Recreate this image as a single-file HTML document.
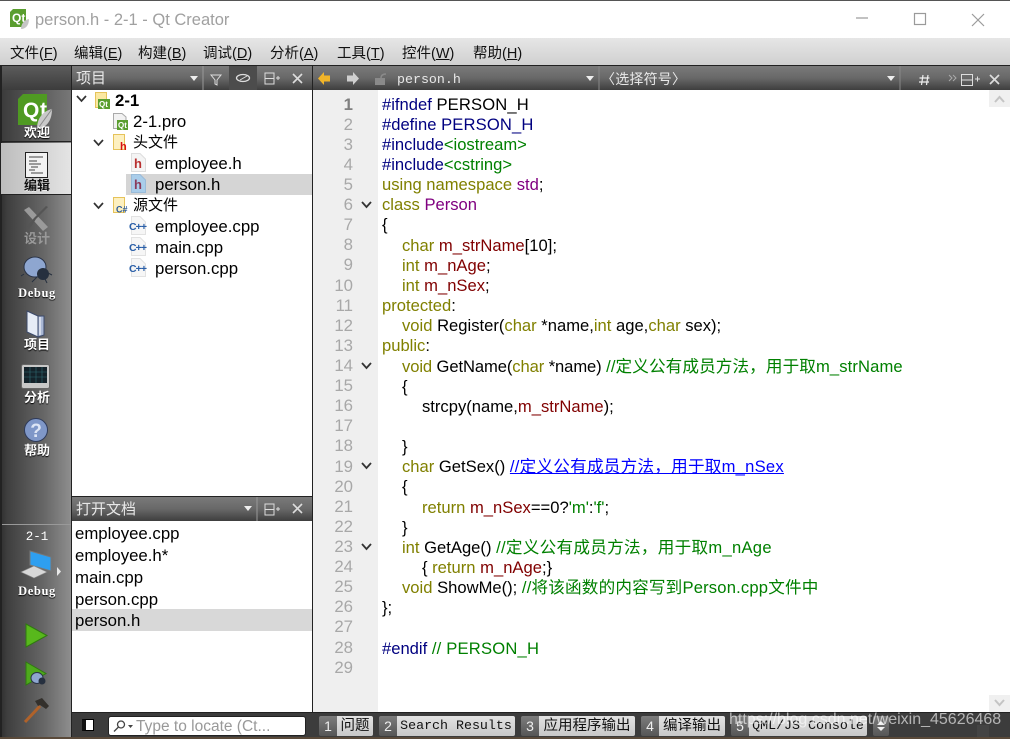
<!DOCTYPE html>
<html><head><meta charset="utf-8"><style>
*{margin:0;padding:0;box-sizing:border-box}
html,body{width:1010px;height:739px;overflow:hidden;background:#2a2a2a}
body{position:relative;font-family:"Liberation Sans","Noto Sans CJK SC",sans-serif;color:#000}
.a{position:absolute;white-space:pre}
.hdr{background:linear-gradient(#7a7a7a,#686868 50%,#3e3e3e);position:absolute}
.w{color:#e8e8e8}
.sb{position:absolute;left:3px;width:68px;text-align:center;color:#fff;font-weight:bold;font-size:13px;line-height:14px;text-shadow:0 1px 1px #000}
.m{font-family:"Liberation Mono","Noto Sans CJK SC",monospace}
.t{position:absolute;font-size:16.8px;line-height:21px;height:21px;white-space:pre}
.code{position:absolute;left:382px;top:94.5px;font-size:16.6px;line-height:20.16px;color:#000}
.code div{height:20.16px;white-space:pre}
.code .i1{padding-left:20px}.code .i2{padding-left:40px}
.nums{position:absolute;left:313px;top:94.6px;width:40px;text-align:right;font-size:16.8px;line-height:20.12px;color:#a8a8a8}
.nums div{height:20.12px}
.p{color:#000080}.k{color:#808000}.c{color:#800080}.g{color:#008000}.r{color:#800000}
.n{position:absolute;top:716px;height:20px;width:18px;background:linear-gradient(#7c7c7c,#565656);color:#eee;font-size:14px;line-height:20px;text-align:center;border-radius:2px 0 0 2px}
.b{position:absolute;top:716px;height:20px;background:linear-gradient(#e2e2e2,#c8c8c8);font-size:13.3px;line-height:20px;color:#111;text-align:center;border-radius:0 2px 2px 0;white-space:pre}
svg{position:absolute;overflow:visible}
</style></head><body>
<div class="a" style="left:0;top:0;width:1010px;height:38px;background:#fff;border-top:1px solid #555"></div>
<svg style="left:10px;top:9px" width="20" height="20"><path d="M3 0H16V15L13 18H0V3Z" fill="#5a9e2f"/><text x="2" y="13" font-size="12" font-weight="bold" fill="#fff" font-family="Liberation Sans">Qt</text><path d="M19 10C14 11 11 15 11 20C16 20 19 16 19 10Z" fill="#c6c6c6"/></svg>
<div class="a" style="left:35px;top:10px;font-size:16.5px;line-height:20px;color:#a0a0a0">person.h - 2-1 - Qt Creator</div>
<svg style="left:856px;top:13px" width="130" height="14" fill="none" stroke="#9a9a9a" stroke-width="1.2"><path d="M0 5H12"/><rect x="58.5" y="0.5" width="11" height="11"/><path d="M116 1L128 13M128 1L116 13"/></svg>

<div class="a" style="left:0;top:38px;width:1010px;height:28px;background:linear-gradient(#e6e6e6,#d0d0d0);border-bottom:1px solid #222"></div>
<div class="a" style="left:10px;top:45px;font-size:14.5px;line-height:18px;color:#111">文件(<u>F</u>)</div>
<div class="a" style="left:74px;top:45px;font-size:14.5px;line-height:18px;color:#111">编辑(<u>E</u>)</div>
<div class="a" style="left:138px;top:45px;font-size:14.5px;line-height:18px;color:#111">构建(<u>B</u>)</div>
<div class="a" style="left:203px;top:45px;font-size:14.5px;line-height:18px;color:#111">调试(<u>D</u>)</div>
<div class="a" style="left:270px;top:45px;font-size:14.5px;line-height:18px;color:#111">分析(<u>A</u>)</div>
<div class="a" style="left:337px;top:45px;font-size:14.5px;line-height:18px;color:#111">工具(<u>T</u>)</div>
<div class="a" style="left:402px;top:45px;font-size:14.5px;line-height:18px;color:#111">控件(<u>W</u>)</div>
<div class="a" style="left:473px;top:45px;font-size:14.5px;line-height:18px;color:#111">帮助(<u>H</u>)</div>

<div class="a" style="left:0;top:66px;width:72px;height:671px;background:linear-gradient(90deg,#333 0,#3f3f3f 8%,#666 60%,#8e8e8e 100%);border-left:2px solid #222;border-right:1px solid #222"></div>
<div class="hdr" style="left:2px;top:66px;width:69px;height:24px;background:linear-gradient(#5c5c5c,#3c3c3c)"></div>
<div class="a" style="left:2px;top:90px;width:69px;height:52px;background:linear-gradient(90deg,#3c3c3c,#777);border-bottom:1px solid #222"></div>
<div class="a" style="left:1px;top:143px;width:70px;height:52px;background:linear-gradient(90deg,#bdbdbd,#e4e4e4);border-bottom:1px solid #222"></div>
<div class="a" style="left:2px;top:524px;width:69px;height:1px;background:#999"></div>

<svg style="left:18px;top:94px" width="36" height="36"><path d="M5 0H29V24L22 31H0V5Z" fill="#4f9a22"/><text x="5" y="23" font-size="21" font-weight="bold" fill="#fff" font-family="Liberation Sans" textLength="24">Qt</text><path d="M34 15C25 17 19 24 19 35C29 34 34 26 34 15Z" fill="#c9c9c9"/><path d="M34 15L21 33" stroke="#8a8a8a"/></svg>
<div class="sb" style="top:126px">欢迎</div>
<svg style="left:25px;top:152px" width="23" height="26"><rect x=".5" y=".5" width="22" height="25" fill="#f2f2f2" stroke="#222"/><path d="M4 5H18M4 9H12M4 12H16M6 15H13M4 18H10M6 21H18" stroke="#444"/></svg>
<div class="sb" style="top:179px;color:#111;text-shadow:0 1px 0 #eee">编辑</div>
<svg style="left:22px;top:206px" width="28" height="26"><path d="M2 4L7 1L26 21L21 25Z" fill="#9a9a9a"/><path d="M26 1L14 13L9 21L4 25L7 18L12 12L24 0Z" fill="#555"/></svg>
<div class="sb" style="top:232px;color:#999;text-shadow:none">设计</div>
<svg style="left:22px;top:256px" width="30" height="28"><ellipse cx="13" cy="11" rx="11" ry="10" fill="#8ea6d0" stroke="#2a3346"/><ellipse cx="21" cy="18" rx="6" ry="6" fill="#26303f"/><path d="M15 21L10 26M23 23L25 27M26 17L30 19M2 18L-1 20" stroke="#26303f"/></svg>
<div class="sb m" style="top:286px;font-family:'Liberation Serif',serif;font-size:12.5px;letter-spacing:.6px">Debug</div>
<svg style="left:26px;top:310px" width="20" height="28"><path d="M1 1L12 6V27L1 22Z" fill="#e6ecf6" stroke="#3c4a6a"/><path d="M12 6H18V25L12 27Z" fill="#a9b7d4" stroke="#3c4a6a"/><path d="M14 7V25" stroke="#fff"/></svg>
<div class="sb" style="top:338px">项目</div>
<svg style="left:21px;top:364px" width="30" height="26"><rect x=".5" y=".5" width="28" height="24" rx="2" fill="#c8c8c8" stroke="#666"/><rect x="3" y="3" width="23" height="16" fill="#14222a"/><path d="M3 8H26M3 13H26M9 3V19M15 3V19M21 3V19" stroke="#2f6a72" stroke-width=".6"/></svg>
<div class="sb" style="top:391px">分析</div>
<svg style="left:24px;top:418px" width="24" height="24"><circle cx="12" cy="12" r="11.5" fill="#7f97c8" stroke="#2f3b5a"/><text x="12" y="19" text-anchor="middle" font-size="19" font-weight="bold" fill="#dde5f5" font-family="Liberation Sans">?</text></svg>
<div class="sb" style="top:444px">帮助</div>
<div class="sb m" style="top:530px;font-weight:normal;font-size:12.5px;text-shadow:none">2-1</div>
<svg style="left:20px;top:550px" width="42" height="30"><path d="M10 1L31 7V21L10 15Z" fill="#2e9ff0" stroke="#777"/><path d="M1 22L14 16L27 22L14 28Z" fill="#d8d8d8" stroke="#888" stroke-width=".6"/><path d="M37 17V26L41 21.5Z" fill="#e8e8e8"/></svg>
<div class="sb m" style="top:584px;font-family:'Liberation Serif',serif;font-size:12.5px;letter-spacing:.6px">Debug</div>
<svg style="left:25px;top:624px" width="23" height="24"><path d="M1 0L22 11.5L1 23Z" fill="#58b81c" stroke="#2f7a10"/></svg>
<svg style="left:25px;top:662px" width="24" height="26"><path d="M1 0L21 11.5L1 23Z" fill="#4ea91c" stroke="#2f7a10"/><ellipse cx="12" cy="16" rx="6" ry="5.5" fill="#8ea6d0" stroke="#2a3346"/><ellipse cx="17" cy="19" rx="3.5" ry="3.5" fill="#26303f"/></svg>
<svg style="left:24px;top:698px" width="26" height="26"><path d="M1 24L16 8" stroke="#b0622a" stroke-width="3"/><path d="M11 3L18 0L25 8L22 11L16 7L14 8Z" fill="#33302c"/></svg>

<div class="a" style="left:72px;top:90px;width:240px;height:406px;background:#fff"></div>
<div class="hdr" style="left:72px;top:66px;width:240px;height:24px"></div>
<div class="a w" style="left:76px;top:69px;font-size:15px;line-height:19px">项目</div>
<svg style="left:190px;top:74px" width="122" height="14" fill="none"><path d="M0 2H8L4 7Z" fill="#eee"/><path d="M13 -8V16" stroke="#999"/><path d="M21 1H31L27 6V11L25 10V6Z" stroke="#ddd"/><path d="M39 -8H67V16H39Z" fill="#4c4c4c"/><ellipse cx="53" cy="4" rx="6.5" ry="3.5" stroke="#ddd" stroke-width="1.3"/><path d="M50 6L57 2" stroke="#ddd"/><path d="M75 -1H84V10H75ZM75 4.5H84M86 4H90M88 2V6" stroke="#ddd"/><path d="M103 0L112 9M112 0L103 9" stroke="#ddd" stroke-width="1.6"/></svg>

<svg style="left:76px;top:95px" width="12" height="8" fill="none" stroke="#333" stroke-width="1.7"><path d="M1 1L5.5 6L10 1"/></svg>
<svg style="left:95px;top:92px" width="16" height="17"><path d="M.5 .5H11.5V15.5H.5Z" fill="#fbe8a0" stroke="#e6c35a"/><rect x="3" y="7" width="12" height="10" fill="#5a9e2f"/><text x="4" y="15" font-size="8" font-weight="bold" fill="#fff" font-family="Liberation Sans">Qt</text></svg>
<div class="t" style="left:115px;top:90px;font-weight:bold">2-1</div>
<svg style="left:113px;top:113px" width="16" height="17"><path d="M.5 .5H9L13 4V15.5H.5Z" fill="#f2f2f2" stroke="#aaa"/><rect x="4" y="7" width="11" height="10" fill="#5a9e2f"/><text x="5" y="15" font-size="8" font-weight="bold" fill="#fff" font-family="Liberation Sans">Qt</text></svg>
<div class="t" style="left:133px;top:111px">2-1.pro</div>
<svg style="left:93px;top:139px" width="12" height="8" fill="none" stroke="#333" stroke-width="1.7"><path d="M1 1L5.5 6L10 1"/></svg>
<svg style="left:113px;top:134px" width="16" height="17"><path d="M.5 .5H11.5V15.5H.5Z" fill="#fdf0c0" stroke="#e6c35a"/><text x="7" y="16" font-size="11" font-weight="bold" fill="#d81010" font-family="Liberation Sans">h</text></svg>
<div class="t" style="left:133px;top:132px;font-size:15px">头文件</div>
<svg style="left:131px;top:153px" width="16" height="20"><path d="M.5 .5H9L14.5 6V18.5H.5Z" fill="#f4f4f4" stroke="#ddd"/><text x="3" y="15" font-size="13" font-weight="bold" fill="#b83030" font-family="Liberation Sans">h</text></svg>
<div class="t" style="left:155px;top:153px">employee.h</div>
<div class="a" style="left:126px;top:174px;width:186px;height:21px;background:#d5d5d5"></div>
<svg style="left:131px;top:174px" width="16" height="20"><path d="M.5 .5H9L14.5 6V18.5H.5Z" fill="#a9cdea" stroke="#9abbd8"/><text x="3" y="15" font-size="13" font-weight="bold" fill="#8a3a5a" font-family="Liberation Sans">h</text></svg>
<div class="t" style="left:155px;top:174px">person.h</div>
<svg style="left:93px;top:202px" width="12" height="8" fill="none" stroke="#333" stroke-width="1.7"><path d="M1 1L5.5 6L10 1"/></svg>
<svg style="left:113px;top:197px" width="17" height="17"><path d="M.5 .5H11.5V15.5H.5Z" fill="#fdf0c0" stroke="#e6c35a"/><text x="3" y="15.5" font-size="9" font-weight="bold" fill="#2a5a9a" font-family="Liberation Sans">C#</text></svg>
<div class="t" style="left:133px;top:195px;font-size:15px">源文件</div>
<svg style="left:129px;top:216px" width="20" height="20"><path d="M2.5 .5H11L16.5 6V18.5H2.5Z" fill="#f6f6f6" stroke="#e2e2e2"/><text x="0" y="14" font-size="10.5" font-weight="bold" fill="#2a5fa8" font-family="Liberation Sans" textLength="18">C++</text></svg>
<div class="t" style="left:155px;top:216px">employee.cpp</div>
<svg style="left:129px;top:237px" width="20" height="20"><path d="M2.5 .5H11L16.5 6V18.5H2.5Z" fill="#f6f6f6" stroke="#e2e2e2"/><text x="0" y="14" font-size="10.5" font-weight="bold" fill="#2a5fa8" font-family="Liberation Sans" textLength="18">C++</text></svg>
<div class="t" style="left:155px;top:237px">main.cpp</div>
<svg style="left:129px;top:258px" width="20" height="20"><path d="M2.5 .5H11L16.5 6V18.5H2.5Z" fill="#f6f6f6" stroke="#e2e2e2"/><text x="0" y="14" font-size="10.5" font-weight="bold" fill="#2a5fa8" font-family="Liberation Sans" textLength="18">C++</text></svg>
<div class="t" style="left:155px;top:258px">person.cpp</div>

<div class="a" style="left:72px;top:496px;width:240px;height:1px;background:#222"></div>
<div class="hdr" style="left:72px;top:497px;width:240px;height:24px"></div>
<div class="a w" style="left:76px;top:500px;font-size:15px;line-height:19px">打开文档</div>
<svg style="left:244px;top:505px" width="66" height="14" fill="none"><path d="M0 1H8L4 6Z" fill="#eee"/><path d="M13 -8V16" stroke="#999"/><path d="M21 -1H30V10H21ZM21 4.5H30M32 4H36M34 2V6" stroke="#ddd"/><path d="M49 -1L58 8M58 -1L49 8" stroke="#ddd" stroke-width="1.6"/></svg>
<div class="a" style="left:72px;top:521px;width:240px;height:191px;background:#fff"></div>
<div class="a" style="left:72px;top:609px;width:240px;height:22px;background:#d8d8d8"></div>
<div class="t" style="left:75px;top:523px">employee.cpp</div>
<div class="t" style="left:75px;top:545px">employee.h*</div>
<div class="t" style="left:75px;top:567px">main.cpp</div>
<div class="t" style="left:75px;top:589px">person.cpp</div>
<div class="t" style="left:75px;top:610px">person.h</div>

<div class="a" style="left:312px;top:66px;width:1px;height:646px;background:#222"></div>
<div class="hdr" style="left:313px;top:66px;width:697px;height:24px"></div>
<svg style="left:318px;top:72px" width="40" height="14"><path d="M0 6.5L6 0V3.5H12V9.5H6V13Z" fill="#f0b429"/><path d="M41 6.5L35 0V3.5H29V9.5H35V13Z" fill="#cfcfcf"/></svg>
<svg style="left:374px;top:73px" width="14" height="12"><rect x="1" y="5" width="10" height="7" fill="#8a8a8a"/><path d="M7 5C7 2 9 1 12 1" fill="none" stroke="#8a8a8a" stroke-width="1.5"/></svg>
<div class="a m w" style="left:397px;top:71px;font-size:13.3px;line-height:17px">person.h</div>
<svg style="left:586px;top:66px" width="424" height="24" fill="none"><path d="M0 10H8L4 15Z" fill="#eee"/><path d="M13 0V24" stroke="#888"/><path d="M301 10H309L305 15Z" fill="#eee"/><path d="M314 0V24" stroke="#888"/><path d="M337 9L335.5 19M342 9L340.5 19M333.5 12H343.500M333 16H343" stroke="#eee" stroke-width="1.2"/><path d="M363 9L366 12L363 15M367 9L370 12L367 15" stroke="#aaa"/><path d="M375.5 8.5H386.5V19.5H375.5ZM375.5 14H386.5M389 13H394M391.5 10.5V15.5" stroke="#ddd"/><path d="M404 9L413 18M413 9L404 18" stroke="#ddd" stroke-width="1.7"/></svg>
<div class="a w" style="left:601px;top:70px;font-size:14px;line-height:19px;letter-spacing:.2px">〈选择符号〉</div>

<div class="a" style="left:313px;top:90px;width:65px;height:622px;background:#efefef"></div>
<div class="a" style="left:378px;top:90px;width:632px;height:622px;background:#fff"></div>
<div class="a" style="left:989px;top:90px;width:21px;height:17px;background:#f0f0f0"></div>
<div class="a" style="left:989px;top:695px;width:21px;height:17px;background:#f0f0f0"></div>
<svg style="left:994px;top:96px" width="12" height="8" fill="none" stroke="#c4c4c4" stroke-width="2"><path d="M1 6L5.5 1L10 6"/></svg>
<svg style="left:994px;top:699px" width="12" height="8" fill="none" stroke="#c4c4c4" stroke-width="2"><path d="M1 1L5.5 6L10 1"/></svg>

<div class="nums"><div style="color:#808080;font-weight:bold">1</div><div>2</div><div>3</div><div>4</div><div>5</div><div>6</div><div>7</div><div>8</div><div>9</div><div>10</div><div>11</div><div>12</div><div>13</div><div>14</div><div>15</div><div>16</div><div>17</div><div>18</div><div>19</div><div>20</div><div>21</div><div>22</div><div>23</div><div>24</div><div>25</div><div>26</div><div>27</div><div>28</div><div>29</div></div>
<svg style="left:361px;top:201px" width="12" height="8" fill="none" stroke="#333" stroke-width="1.8"><path d="M1 1L5.5 6L10 1"/></svg>
<svg style="left:361px;top:362px" width="12" height="8" fill="none" stroke="#333" stroke-width="1.8"><path d="M1 1L5.5 6L10 1"/></svg>
<svg style="left:361px;top:462px" width="12" height="8" fill="none" stroke="#333" stroke-width="1.8"><path d="M1 1L5.5 6L10 1"/></svg>
<svg style="left:361px;top:543px" width="12" height="8" fill="none" stroke="#333" stroke-width="1.8"><path d="M1 1L5.5 6L10 1"/></svg>

<div class="code">
<div><span class="p">#ifndef</span> <span style="letter-spacing:.15px">PERSON_H</span></div>
<div><span class="p">#define <span style="letter-spacing:.15px">PERSON_H</span></span></div>
<div><span class="p">#include</span><span class="g">&lt;iostream&gt;</span></div>
<div><span class="p">#include</span><span class="g">&lt;cstring&gt;</span></div>
<div><span class="k">using namespace</span> <span class="c">std</span>;</div>
<div><span class="k">class</span> <span class="c">Person</span></div>
<div>{</div>
<div class="i1"><span class="k">char</span> <span class="r">m_strName</span>[10];</div>
<div class="i1"><span class="k">int</span> <span class="r">m_nAge</span>;</div>
<div class="i1"><span class="k">int</span> <span class="r">m_nSex</span>;</div>
<div><span class="k">protected</span>:</div>
<div class="i1"><span class="k">void</span> Register(<span class="k">char</span> *name,<span class="k">int</span> age,<span class="k">char</span> sex);</div>
<div><span class="k">public</span>:</div>
<div class="i1"><span style="letter-spacing:-.1px"><span class="k">void</span> GetName(<span class="k">char</span> *name) </span><span class="g" style="letter-spacing:.11px">//定义公有成员方法，用于取m_strName</span></div>
<div class="i1">{</div>
<div class="i2">strcpy(name,<span class="r">m_strName</span>);</div>
<div> </div>
<div class="i1">}</div>
<div class="i1"><span class="k">char</span> GetSex() <span style="color:#0000ff;text-decoration:underline;letter-spacing:.24px">//定义公有成员方法，用于取m_nSex</span></div>
<div class="i1">{</div>
<div class="i2"><span class="k">return</span> <span class="r">m_nSex</span>==0?<span class="g">'m'</span>:<span class="g">'f'</span>;</div>
<div class="i1">}</div>
<div class="i1"><span class="k">int</span> GetAge() <span class="g" style="letter-spacing:.28px">//定义公有成员方法，用于取m_nAge</span></div>
<div class="i2">{ <span class="k">return</span> <span class="r">m_nAge</span>;}</div>
<div class="i1"><span class="k">void</span> ShowMe(); <span class="g" style="letter-spacing:.18px">//将该函数的内容写到Person.cpp文件中</span></div>
<div>};</div>
<div> </div>
<div><span class="p">#endif</span> <span class="g" style="letter-spacing:.2px">// PERSON_H</span></div>
<div> </div>
</div>

<div class="a" style="left:72px;top:712px;width:938px;height:25px;background:#3c3c3c;border-top:1px solid #222"></div>
<div class="a" style="left:0;top:737px;width:1010px;height:2px;background:#5a4a3a"></div>
<div class="a" style="left:82px;top:719px;width:12px;height:12px;background:#fff;border:1px solid #000;border-left:4px solid #111"></div>
<div class="a" style="left:108px;top:716px;width:198px;height:20px;background:#fff;border:1px solid #222;border-radius:3px"></div>
<svg style="left:113px;top:720px" width="20" height="12" fill="none" stroke="#444" stroke-width="1.3"><circle cx="8" cy="4.5" r="3.5"/><path d="M5.5 7L1 11.5"/><path d="M15 5H20L17.5 8Z" fill="#444" stroke="none"/></svg>
<div class="a" style="left:136px;top:717px;font-size:15.5px;line-height:20px;color:#999">Type to locate (Ct...</div>
<div class="n" style="left:319px">1</div><div class="b" style="left:337px;width:36px;font-size:14.5px">问题</div>
<div class="n" style="left:379px">2</div><div class="b m" style="left:397px;width:118px">Search Results</div>
<div class="n" style="left:521px">3</div><div class="b" style="left:539px;width:96px;font-size:14.5px">应用程序输出</div>
<div class="n" style="left:641px">4</div><div class="b" style="left:659px;width:66px;font-size:14.5px">编译输出</div>
<div class="n" style="left:731px">5</div><div class="b m" style="left:749px;width:118px">QML/JS Console</div>
<div class="a" style="left:873px;top:716px;width:16px;height:20px;background:linear-gradient(#7c7c7c,#565656);border-radius:2px"></div>
<svg style="left:877px;top:721px" width="8" height="11"><path d="M0 4L4 0L8 4ZM0 6H8L4 10Z" fill="#eee"/></svg>
<div class="a" style="left:977px;top:725px;width:12px;height:12px;background:#444"></div>
<div class="a" style="left:729px;top:710px;font-size:16px;line-height:20px;color:rgba(255,255,255,.62)">https://blog.csdn.net/weixin_45626468</div>
</body></html>
